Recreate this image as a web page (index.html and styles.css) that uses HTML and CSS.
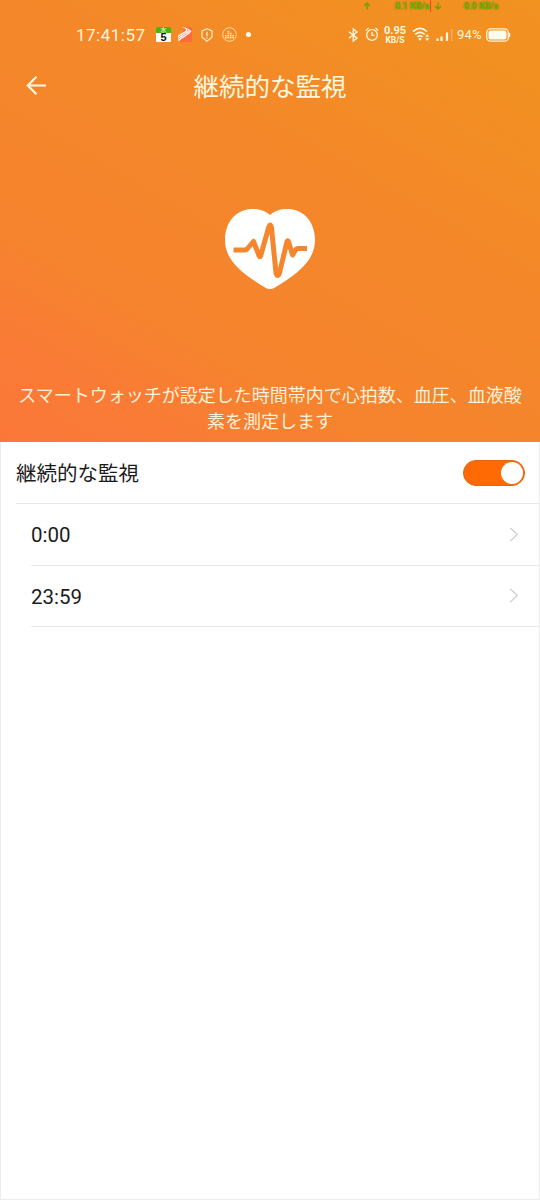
FILE: index.html
```html
<!DOCTYPE html>
<html lang="ja">
<head>
<meta charset="utf-8">
<title>継続的な監視</title>
<link rel="stylesheet" href="styles.css">
</head>
<body>
<main class="screen">
  <header class="hero">
    <div class="traffic">
      <svg class="traffic-arrow" viewBox="0 0 8 8"><path d="M4 7.5V1M1 4l3-3 3 3"/></svg>
      <span class="traffic-rate up">0.1 KB/s</span>
      <span class="traffic-split"></span>
      <svg class="traffic-arrow" viewBox="0 0 8 8"><path d="M4 .5V7M1 4l3 3 3-3"/></svg>
      <span class="traffic-rate down">0.0 KB/s</span>
    </div>
    <div class="status">
      <div class="status-left">
        <span class="clock">17:41:57</span>
        <span class="calendar"><span class="weekday">水</span><span class="date">5</span></span>
        <svg class="track" viewBox="0 0 14 15"><path fill="#ff6a3c" d="M7 0h5q2 0 2 2v11q0 2-2 2H1z"/><path fill="#fff" d="M4 .3Q9 0 13.500 4.200 11 7.500 7 9.800 3 12 .5 14.500L0 8.500Q2 6.800 5 5.500 8.500 4 7.800 2.500 7 .8 4 .3z"/><path fill="none" stroke="#ef8b62" stroke-width=".7" d="M.3 10.500Q2 8.500 5.500 7 11 4.500 9 1.500M.4 12.500Q2.500 10 6 8.500 12 5.800 11 3"/></svg>
        <svg class="shield" viewBox="0 0 12 14"><path d="M6 .8 11 3v6.200L6 13.200 1 9.200V3z"/><path d="M6 3.800v4.400M6 9.300v1.200"/></svg>
        <svg class="equalizer" viewBox="0 0 15 15"><circle cx="7.500" cy="7.500" r="6.800"/><path stroke-dasharray="1.500 .6" stroke-width="1.700" d="M3.900 11.500V7.500M6.300 11.500V3.500M8.700 11.500V5.300M11.100 11.500V7.500"/></svg>
        <span class="dot"></span>
      </div>
      <div class="status-right">
        <svg class="bluetooth" viewBox="0 0 11 14"><path d="m1 3.700 8 6.400-3.700 3V1L9 4 1 10.300"/></svg>
        <svg class="alarm" viewBox="0 0 14 15"><circle cx="7" cy="8" r="5.400"/><path d="M7 5v3.300h2.500M1 3.600 3.500 1M13 3.600 10.500 1"/></svg>
        <span class="speed"><span class="speed-value">0.95</span><span class="speed-unit">KB/S</span></span>
        <svg class="wifi" viewBox="0 0 18 15"><path d="M1 4.600Q8 -1.800 15 4.600M3.200 7.500Q8 3.200 12.800 7.500M5.300 10Q8 7.800 10.600 10"/><path class="solid" d="m8 13.700-1.800-2Q8 10.300 9.800 11.700zM15.200 7l2.100 2.700h-4.200zM15.200 14l2.100-2.700h-4.200z"/></svg>
        <svg class="signal" viewBox="0 0 18 14"><path d="M1.500 10.500V13M5.500 8.500V13M11 4.500V13"/><path class="faint" d="M15.700 1V13"/></svg>
        <span class="percent">94%</span>
        <svg class="battery" viewBox="0 0 25 14"><rect x=".8" y=".8" width="21.500" height="12.400" rx="3.800"/><rect class="charge" x="2.500" y="2.500" width="18" height="9" rx="2"/><path d="M23.600 5v4"/></svg>
      </div>
    </div>
    <div class="titlebar">
      <svg class="back" viewBox="0 0 22 22"><path d="M21 11H2M11 1.800 1.800 11l9.200 9.200"/></svg>
      <h1 class="title">継続的な監視</h1>
    </div>
    <svg class="heart" viewBox="0 0 92 82"><path fill="#fff" d="M46 7C53 1 59 1 65 1 81 2 91 15 91 32 91 52 75 65 51 79.500Q46 82.500 41 79.500C17 65 1 52 1 32 1 15 11 2 27 1 33 1 39 1 46 7z"/><path class="pulse" d="M9.500 42H21q1.500 0 3-2l5.500-6.500 5.700 14.500q.7 1.500 1.400 0L44.500 20q1.800-6 3 0L52 65q1.500 5 3.500 0L63 33.500q.7-1.500 1.400 0L68.600 47l2.600-4.500q1.200-2 3-2H83"/></svg>
    <p class="description">スマートウォッチが設定した時間帯内で心拍数、血圧、血液酸素を測定します</p>
  </header>
  <section class="settings">
    <div class="row main-row">
      <span class="label">継続的な監視</span>
      <span class="toggle"><span class="knob"></span></span>
    </div>
    <div class="row time-row">
      <span class="time">0:00</span>
      <svg class="chevron" viewBox="0 0 10 16"><path d="m1 1 7.500 7L1 15"/></svg>
    </div>
    <div class="row time-row">
      <span class="time">23:59</span>
      <svg class="chevron" viewBox="0 0 10 16"><path d="m1 1 7.500 7L1 15"/></svg>
    </div>
  </section>
</main>
</body>
</html>
```
FILE: styles.css
```css
* { box-sizing: border-box; }
body {
  margin: 0;
  background: #fff;
  font-family: Roboto, "Noto Sans CJK JP", sans-serif;
}
svg { display: block; flex: none; fill: none; overflow: visible; }
.screen {
  height: 1200px;
  border: 1px solid #ececec;
  border-top: 0;
}
.hero {
  position: relative;
  height: 442px;
  margin: 0 -1px;
  padding-top: 22px;
  background: linear-gradient(30deg, #fb7739 0%, #f97c35 16%, #f6832e 28%, #f48829 62%, #f28f22 85%, #f29221 100%);
  color: #fff7df;
}

/* Network rates drawn over the status bar */
.traffic {
  position: absolute;
  top: 0;
  left: 363px;
  height: 12px;
  display: flex;
  align-items: center;
  color: #5fb800;
  font-size: 9px;
  font-weight: 500;
  line-height: 12px;
  white-space: nowrap;
  text-shadow: 0 0 2px #5c7400;
}
.traffic-arrow { width: 8px; height: 8px; stroke: #7c9d08; stroke-width: 1.500; }
.traffic-rate { width: 34px; }
.up { margin-left: 24px; }
.traffic-split { width: 1px; height: 12px; margin: 0 3px 0 1px; background: #f54a16; }
.down { margin-left: 22px; }

.status { height: 25px; padding-left: 76px; display: flex; align-items: center; }
.status-left { display: flex; align-items: center; width: 272px; }
.status-right { display: flex; align-items: center; }
.clock { width: 80px; font-size: 17px; line-height: 24px; letter-spacing: .5px; }
.calendar {
  width: 15px;
  height: 15px;
  border-radius: 1px;
  overflow: hidden;
  background: #fff;
  color: #111;
  text-align: center;
  display: flex;
  flex-direction: column;
}
.weekday { height: 6px; background: #46b60c; color: #fff; font-size: 6px; line-height: 6px; }
.date { font: bold 11px/9px "Liberation Sans", sans-serif; }
.track { width: 14px; height: 15px; margin-left: 7px; }
.shield { width: 12px; height: 14px; margin-left: 9px; stroke: #fff0cf; stroke-width: 1.200; }
.equalizer { width: 15px; height: 15px; margin-left: 9px; stroke: #ffe3b0; stroke-width: .9; }
.dot { width: 5px; height: 5px; margin-left: 9px; border-radius: 50%; background: #fffdf2; }
.bluetooth { width: 11px; height: 14px; stroke: #fff7df; stroke-width: 1.400; }
.alarm { width: 14px; height: 15px; margin-left: 6px; stroke: #fff7df; stroke-width: 1.300; }
.speed { width: 24px; margin-left: 4px; display: flex; flex-direction: column; align-items: center; font-weight: 700; }
.speed-value { padding-top: 1px; font-size: 11px; line-height: 10px; }
.speed-unit { font-size: 8.500px; line-height: 9px; }
.wifi { width: 18px; height: 15px; margin-left: 5px; stroke: #fff7df; stroke-width: 1.600; }
.wifi .solid { fill: #fff7df; stroke: none; }
.signal { width: 18px; height: 14px; margin-left: 6px; stroke: #fff7df; stroke-width: 2.200; }
.signal .faint { stroke: #f9b769; stroke-width: 1.200; }
.percent { width: 29px; margin-left: 3px; font-size: 13px; line-height: 16px; letter-spacing: .2px; }
.battery { width: 25px; height: 14px; stroke: #fff7df; stroke-width: 1.300; }
.battery .charge { fill: #fffdf0; stroke: none; }

.titlebar {
  height: 78px;
  display: grid;
  grid-template-columns: 72px 1fr 72px;
  align-items: center;
}
.back { width: 21px; height: 21px; margin: 0 0 1px 26px; stroke: #fff9e6; stroke-width: 2.300; }
.title { margin: 0; padding-top: 2px; font-size: 25.500px; font-weight: 400; line-height: 36px; text-align: center; }
.heart { width: 92px; height: 82px; margin: 83px auto 0; }
.pulse { stroke: #f5862d; stroke-width: 5; stroke-linejoin: round; }
.description {
  margin: 93px 0 0;
  padding: 0 17px;
  font-size: 18px;
  line-height: 26px;
  text-align: center;
  color: #fff0d8;
}

.settings { color: #1c1c1c; }
.row { display: flex; align-items: center; justify-content: space-between; border-bottom: 1px solid #e8e8e8; }
.main-row { height: 62px; margin-left: 15px; padding-right: 14px; }
.label { padding-top: 3px; font-size: 20.500px; line-height: 30px; }
.toggle {
  width: 62px;
  height: 26px;
  padding: 1px;
  display: flex;
  justify-content: flex-end;
  border: 1px solid #dc6412;
  border-radius: 13px;
  background: #ff6a05;
}
.knob { width: 22px; height: 22px; border-radius: 50%; background: #fff; }
.time-row { height: 61.500px; margin-left: 30px; padding-right: 20px; }
.time { padding-top: 2px; font-size: 20.500px; line-height: 28px; }
.chevron { width: 10px; height: 15px; stroke: #c9c9c9; stroke-width: 1.200; }
```
